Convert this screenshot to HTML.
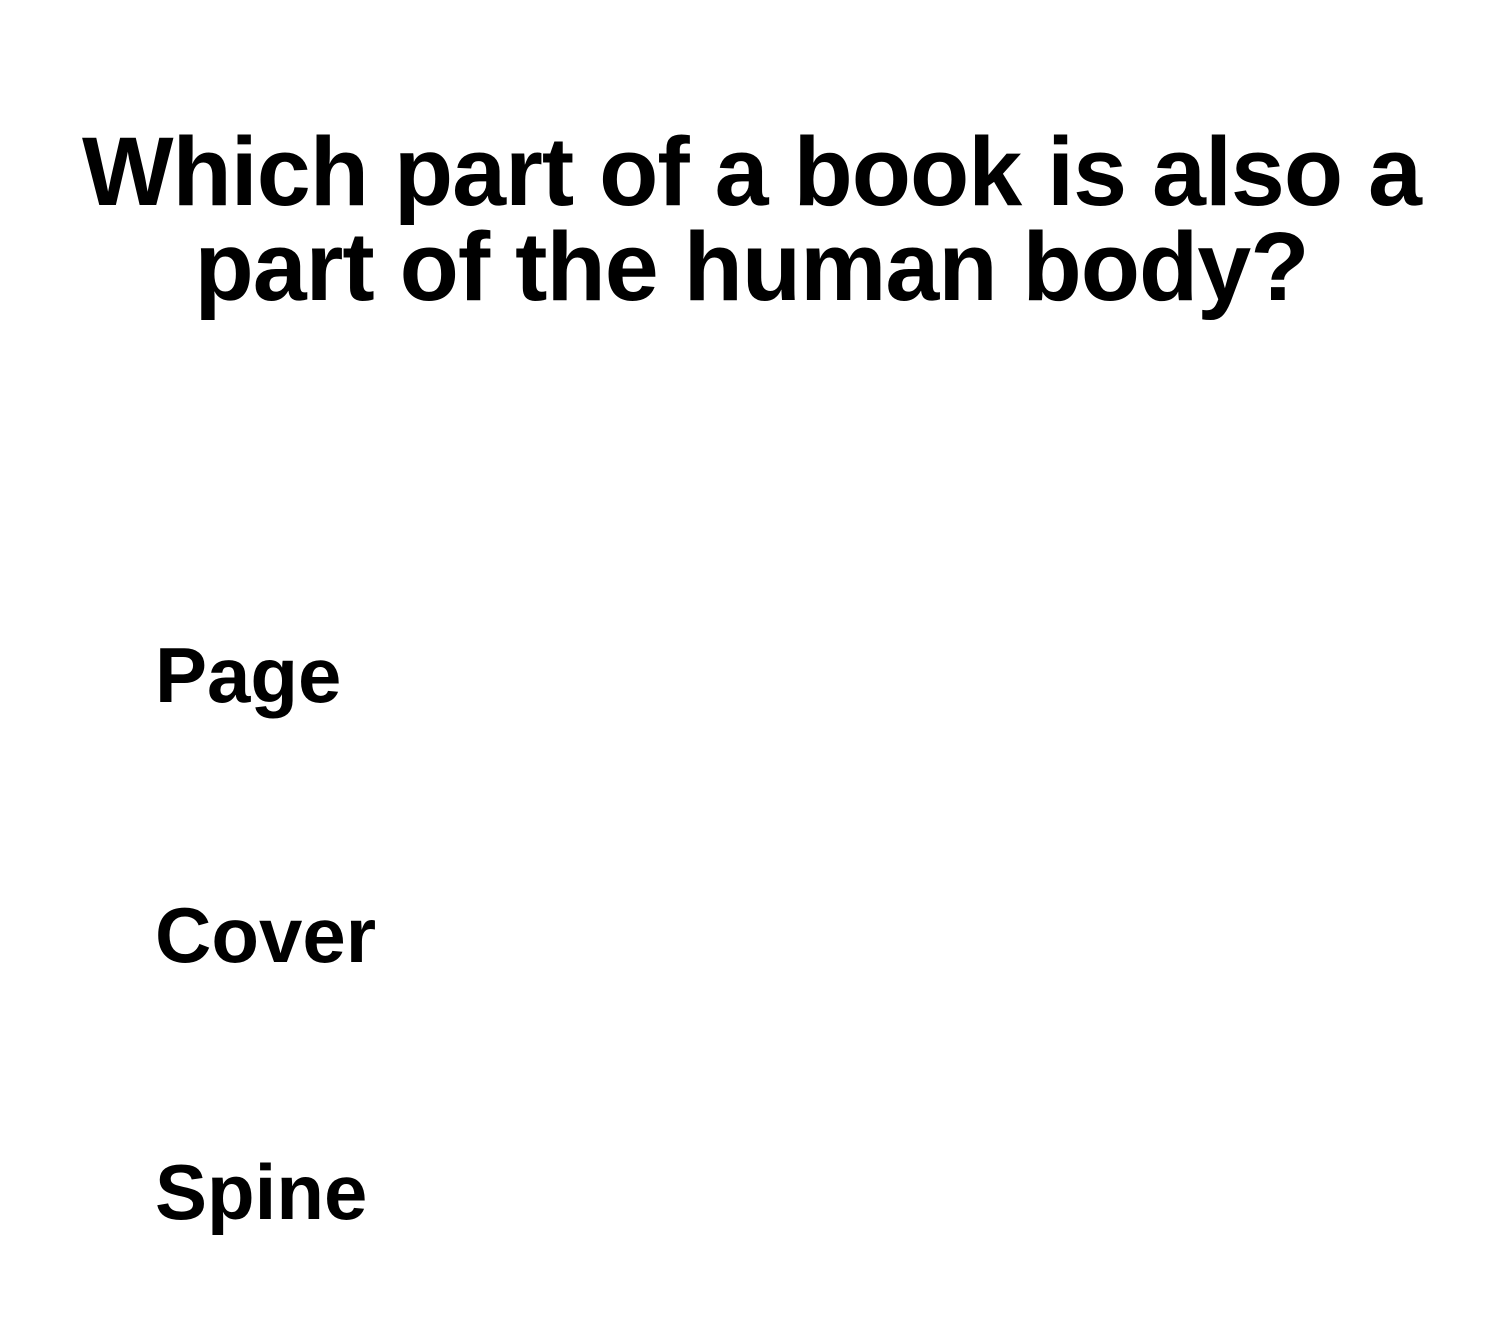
<!DOCTYPE html>
<html><head><meta charset="utf-8"><style>
html,body{margin:0;padding:0;background:#fff;width:1503px;height:1326px;overflow:hidden}
body{font-family:"Liberation Sans",sans-serif;color:#000;position:relative}
h1{position:absolute;left:0;width:1503px;top:124px;margin:0;text-align:center;font-weight:bold;font-size:97px;line-height:95px;letter-spacing:-1px}
.o{position:absolute;left:155px;font-weight:bold;font-size:78px;line-height:1;letter-spacing:0px}
</style></head><body>
<h1>Which part of a book is also a<br>part of the human body?</h1>
<div class="o" style="top:636px">Page</div>
<div class="o" style="top:896px">Cover</div>
<div class="o" style="top:1153px">Spine</div>
</body></html>
